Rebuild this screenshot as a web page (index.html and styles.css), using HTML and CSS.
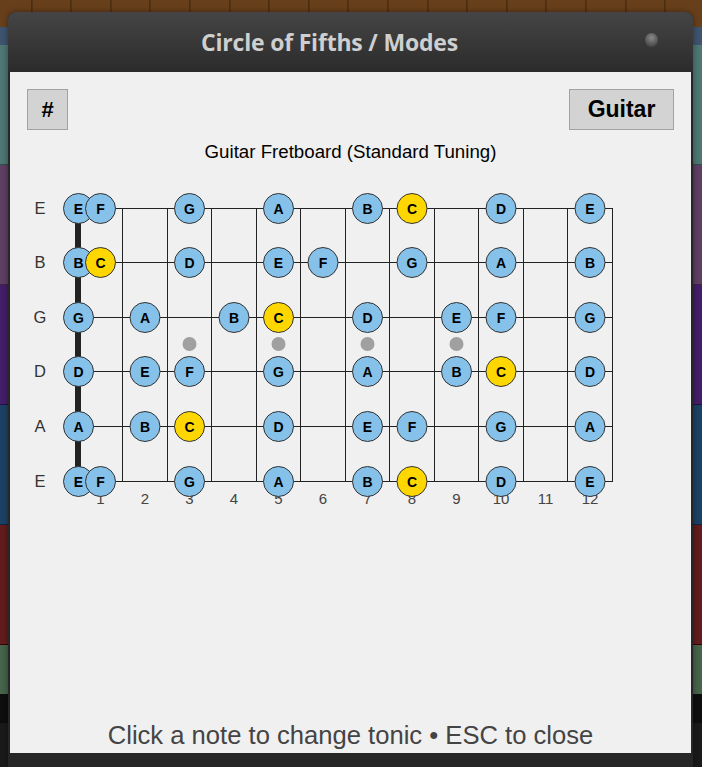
FILE: index.html
```html
<!DOCTYPE html>
<html>
<head>
<meta charset="utf-8">
<link rel="stylesheet" href="styles.css">
</head>
<body>
<div class="bg">
  <div class="strip brown"></div>
  <div class="strip slate"></div>
  <div class="strip teal"></div>
  <div class="strip plum"></div>
  <div class="strip violet"></div>
  <div class="strip navy"></div>
  <div class="strip wine"></div>
  <div class="strip moss"></div>
  <div class="strip ink"></div>
  <div class="strip coal"></div>
</div>
<div class="modal">
  <div class="modal-head">
    <span class="modal-title">Circle of Fifths / Modes</span>
    <span class="close-dot"></span>
  </div>
  <div class="modal-body">
    <div class="toolbar">
      <button class="btn btn-sharp">#</button>
      <button class="btn btn-guitar">Guitar</button>
    </div>
    <div class="fb-title">Guitar Fretboard (Standard Tuning)</div>
    <svg class="fretboard" width="681" height="353" viewBox="10 162 681 353">
      <g class="labels">
        <text x="40" y="214">E</text>
        <text x="40" y="268">B</text>
        <text x="40" y="323">G</text>
        <text x="40" y="377">D</text>
        <text x="40" y="432">A</text>
        <text x="40" y="487">E</text>
      </g>
      <g class="strings">
        <line x1="78" y1="208.5" x2="612.5" y2="208.5"/>
        <line x1="78" y1="262.5" x2="612.5" y2="262.5"/>
        <line x1="78" y1="317.5" x2="612.5" y2="317.5"/>
        <line x1="78" y1="371.5" x2="612.5" y2="371.5"/>
        <line x1="78" y1="426.5" x2="612.5" y2="426.5"/>
        <line x1="78" y1="481.5" x2="612.5" y2="481.5"/>
      </g>
      <g class="frets">
        <line x1="122.5" y1="208" x2="122.5" y2="482"/>
        <line x1="167.5" y1="208" x2="167.5" y2="482"/>
        <line x1="211.5" y1="208" x2="211.5" y2="482"/>
        <line x1="256.5" y1="208" x2="256.5" y2="482"/>
        <line x1="300.5" y1="208" x2="300.5" y2="482"/>
        <line x1="345.5" y1="208" x2="345.5" y2="482"/>
        <line x1="389.5" y1="208" x2="389.5" y2="482"/>
        <line x1="434.5" y1="208" x2="434.5" y2="482"/>
        <line x1="478.5" y1="208" x2="478.5" y2="482"/>
        <line x1="523.5" y1="208" x2="523.5" y2="482"/>
        <line x1="567.5" y1="208" x2="567.5" y2="482"/>
        <line x1="612.5" y1="208" x2="612.5" y2="482"/>
      </g>
      <line class="nut" x1="78" y1="208" x2="78" y2="482"/>
      <g class="inlays">
        <circle cx="189.5" cy="344" r="7"/>
        <circle cx="278.5" cy="344" r="7"/>
        <circle cx="367.5" cy="344" r="7"/>
        <circle cx="456.5" cy="344" r="7"/>
      </g>
      <g class="fretnums">
        <text x="100.5" y="504">1</text>
        <text x="145" y="504">2</text>
        <text x="189.5" y="504">3</text>
        <text x="234" y="504">4</text>
        <text x="278.5" y="504">5</text>
        <text x="323" y="504">6</text>
        <text x="367.5" y="504">7</text>
        <text x="412" y="504">8</text>
        <text x="456.5" y="504">9</text>
        <text x="501" y="504">10</text>
        <text x="545.5" y="504">11</text>
        <text x="590" y="504">12</text>
      </g>
      <g class="notes">
        <g class="n" transform="translate(78.5,208.5)"><circle r="15"/><text y="5">E</text></g>
        <g class="n" transform="translate(100.5,208.5)"><circle r="15"/><text y="5">F</text></g>
        <g class="n" transform="translate(189.5,208.5)"><circle r="15"/><text y="5">G</text></g>
        <g class="n" transform="translate(278.5,208.5)"><circle r="15"/><text y="5">A</text></g>
        <g class="n" transform="translate(367.5,208.5)"><circle r="15"/><text y="5">B</text></g>
        <g class="n tonic" transform="translate(412,208.5)"><circle r="15"/><text y="5">C</text></g>
        <g class="n" transform="translate(501,208.5)"><circle r="15"/><text y="5">D</text></g>
        <g class="n" transform="translate(590,208.5)"><circle r="15"/><text y="5">E</text></g>

        <g class="n" transform="translate(78.5,262.5)"><circle r="15"/><text y="5">B</text></g>
        <g class="n tonic" transform="translate(100.5,262.5)"><circle r="15"/><text y="5">C</text></g>
        <g class="n" transform="translate(189.5,262.5)"><circle r="15"/><text y="5">D</text></g>
        <g class="n" transform="translate(278.5,262.5)"><circle r="15"/><text y="5">E</text></g>
        <g class="n" transform="translate(323,262.5)"><circle r="15"/><text y="5">F</text></g>
        <g class="n" transform="translate(412,262.5)"><circle r="15"/><text y="5">G</text></g>
        <g class="n" transform="translate(501,262.5)"><circle r="15"/><text y="5">A</text></g>
        <g class="n" transform="translate(590,262.5)"><circle r="15"/><text y="5">B</text></g>

        <g class="n" transform="translate(78.5,317.5)"><circle r="15"/><text y="5">G</text></g>
        <g class="n" transform="translate(145,317.5)"><circle r="15"/><text y="5">A</text></g>
        <g class="n" transform="translate(234,317.5)"><circle r="15"/><text y="5">B</text></g>
        <g class="n tonic" transform="translate(278.5,317.5)"><circle r="15"/><text y="5">C</text></g>
        <g class="n" transform="translate(367.5,317.5)"><circle r="15"/><text y="5">D</text></g>
        <g class="n" transform="translate(456.5,317.5)"><circle r="15"/><text y="5">E</text></g>
        <g class="n" transform="translate(501,317.5)"><circle r="15"/><text y="5">F</text></g>
        <g class="n" transform="translate(590,317.5)"><circle r="15"/><text y="5">G</text></g>

        <g class="n" transform="translate(78.5,371.5)"><circle r="15"/><text y="5">D</text></g>
        <g class="n" transform="translate(145,371.5)"><circle r="15"/><text y="5">E</text></g>
        <g class="n" transform="translate(189.5,371.5)"><circle r="15"/><text y="5">F</text></g>
        <g class="n" transform="translate(278.5,371.5)"><circle r="15"/><text y="5">G</text></g>
        <g class="n" transform="translate(367.5,371.5)"><circle r="15"/><text y="5">A</text></g>
        <g class="n" transform="translate(456.5,371.5)"><circle r="15"/><text y="5">B</text></g>
        <g class="n tonic" transform="translate(501,371.5)"><circle r="15"/><text y="5">C</text></g>
        <g class="n" transform="translate(590,371.5)"><circle r="15"/><text y="5">D</text></g>

        <g class="n" transform="translate(78.5,426.5)"><circle r="15"/><text y="5">A</text></g>
        <g class="n" transform="translate(145,426.5)"><circle r="15"/><text y="5">B</text></g>
        <g class="n tonic" transform="translate(189.5,426.5)"><circle r="15"/><text y="5">C</text></g>
        <g class="n" transform="translate(278.5,426.5)"><circle r="15"/><text y="5">D</text></g>
        <g class="n" transform="translate(367.5,426.5)"><circle r="15"/><text y="5">E</text></g>
        <g class="n" transform="translate(412,426.5)"><circle r="15"/><text y="5">F</text></g>
        <g class="n" transform="translate(501,426.5)"><circle r="15"/><text y="5">G</text></g>
        <g class="n" transform="translate(590,426.5)"><circle r="15"/><text y="5">A</text></g>

        <g class="n" transform="translate(78.5,481.5)"><circle r="15"/><text y="5">E</text></g>
        <g class="n" transform="translate(100.5,481.5)"><circle r="15"/><text y="5">F</text></g>
        <g class="n" transform="translate(189.5,481.5)"><circle r="15"/><text y="5">G</text></g>
        <g class="n" transform="translate(278.5,481.5)"><circle r="15"/><text y="5">A</text></g>
        <g class="n" transform="translate(367.5,481.5)"><circle r="15"/><text y="5">B</text></g>
        <g class="n tonic" transform="translate(412,481.5)"><circle r="15"/><text y="5">C</text></g>
        <g class="n" transform="translate(501,481.5)"><circle r="15"/><text y="5">D</text></g>
        <g class="n" transform="translate(590,481.5)"><circle r="15"/><text y="5">E</text></g>
      </g>
    </svg>
    <div class="footer">Click a note to change tonic • ESC to close</div>
  </div>
</div>
</body>
</html>
```
FILE: styles.css
```css
html, body {
  margin: 0;
  padding: 0;
  width: 702px;
  height: 767px;
  overflow: hidden;
  font-family: "Liberation Sans", Arial, sans-serif;
}

.bg {
  display: flex;
  flex-direction: column;
  width: 702px;
  height: 767px;
}

.strip { flex: none; }
.brown {
  height: 27px;
  background-color: #683f1b;
  background-image: repeating-linear-gradient(90deg, transparent 0 38.6px, #3a230e 38.6px 39.6px);
  background-position: -7.6px 0;
}
.slate  { height: 18px; background: #3e546e; }
.teal   { height: 119px; background: #4f7774; border-bottom: 1px solid #2f4f4c; }
.plum   { height: 119px; background: #5f4063; border-bottom: 1px solid #3e2540; }
.violet { height: 119px; background: #441e69; border-bottom: 1px solid #2a0f45; }
.navy   { height: 119px; background: #1b4266; border-bottom: 1px solid #0f2745; }
.wine   { height: 119px; background: #621c1d; border-bottom: 1px solid #3a0000; }
.moss   { height: 49px; background: #46654a; }
.ink    { height: 29px; background: #0e0e0e; }
.coal   { flex: 1; background: #1a1a1a; }

.modal {
  position: absolute;
  left: 8px;
  top: 12px;
  width: 685px;
  height: 755px;
  background: #262626;
  border-radius: 8px 8px 0 0;
  display: flex;
  flex-direction: column;
  box-shadow: 0 0 6px rgba(0,0,0,0.4);
}

.modal-head {
  height: 60px;
  flex: none;
  display: flex;
  align-items: center;
  padding-left: 6px;
  border-radius: 8px 8px 0 0;
  background: linear-gradient(#454545, #2b2b2b);
}

.modal-title {
  flex: 1;
  text-align: center;
  font-family: "Open Sans", "Noto Sans", sans-serif;
  font-weight: 700;
  font-size: 23px;
  color: #cfcfcf;
  letter-spacing: -0.2px;
}

.close-dot {
  flex: none;
  width: 13px;
  height: 14px;
  margin: 0 35px 5px 0;
  border-radius: 50%;
  background: radial-gradient(circle at 50% 35%, #8a8a8a, #555 60%, #3a3a3a);
}

.modal-body {
  margin: 0 2px;
  height: 681px;
  flex: none;
  background: #f0f0f0;
  display: flex;
  flex-direction: column;
  padding: 17px 17px 0;
  box-sizing: border-box;
}

.toolbar {
  display: flex;
  justify-content: space-between;
  align-items: flex-start;
}

.btn {
  font-family: "Liberation Sans", Arial, sans-serif;
  font-weight: 700;
  color: #000;
  background: #d3d3d3;
  border: 1px solid #a2a2a2;
  height: 41px;
  margin: 0;
  padding: 0;
}
.btn-sharp { width: 41px; font-size: 22px; }
.btn-guitar { width: 105px; font-size: 23px; }

.fb-title {
  margin-top: 12px;
  text-align: center;
  font-size: 18.7px;
  line-height: 20px;
  color: #000;
}

.fretboard {
  display: block;
  margin: 0 -17px;
  flex: none;
}

.labels text {
  font-family: "Liberation Sans", Arial, sans-serif;
  font-size: 16.5px;
  fill: #333;
  text-anchor: middle;
}
.strings line, .frets line {
  stroke: #222;
  stroke-width: 1;
}
.nut {
  stroke: #222;
  stroke-width: 6;
}
.inlays circle { fill: #a0a0a0; }
.fretnums text {
  font-family: "Liberation Sans", Arial, sans-serif;
  font-size: 15px;
  fill: #444;
  text-anchor: middle;
}
.n circle {
  fill: #85c1e9;
  stroke: #333;
  stroke-width: 1;
}
.n.tonic circle { fill: #ffd700; }
.n text {
  font-family: "Liberation Sans", Arial, sans-serif;
  font-weight: 700;
  font-size: 14px;
  fill: #000;
  text-anchor: middle;
}

.footer {
  margin-top: auto;
  text-align: center;
  font-size: 25.6px;
  line-height: 28px;
  color: #444;
  padding-bottom: 4px;
  white-space: nowrap;
}
```
